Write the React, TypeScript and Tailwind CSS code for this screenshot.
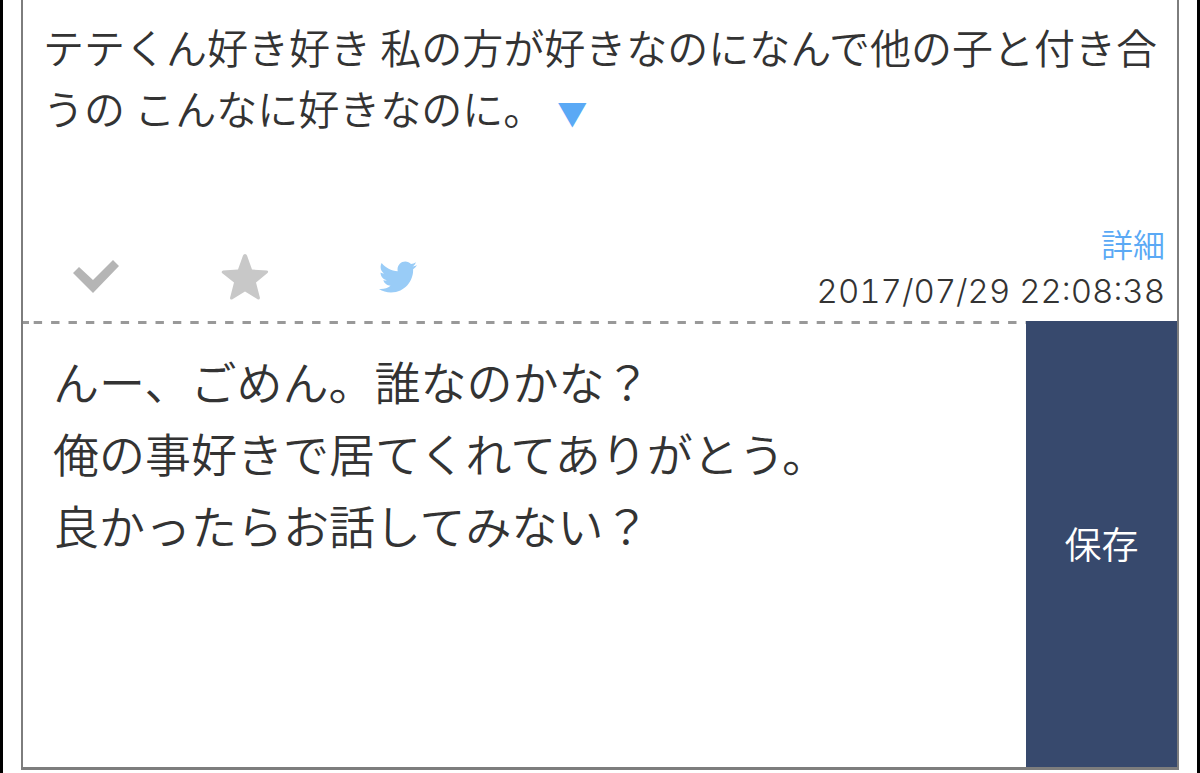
import React, { useState } from "react";
import { FaTwitter } from "react-icons/fa";

const defaultReply = [
  "んー、ごめん。誰なのかな？",
  "俺の事好きで居てくれてありがとう。",
  "良かったらお話してみない？",
].join("\n");

const CheckIcon = () => (
  <svg width="46" height="33" viewBox="0 0 46 33" fill="#b5b5b5">
    <path d="M6 7 L0 13 L20 33 L46 6 L40 0 L20 20 Z" />
  </svg>
);

const StarIcon = () => (
  <svg width="48" height="46" viewBox="0 0 48 46" fill="#c8c8c8">
    <path d="M24 0 Q25.5 0 26 1.5 L31 15.5 L46 16.5 Q48 17.5 46.5 19 L35 28.5 L39 44 Q38.5 46 37 45.500 L24 37.500 L11 45.500 Q9 46 9 44 L13 28.500 L1 19 Q0 17.500 2 16.500 L17 15.500 L22 1.500 Q22.500 0 24 0 Z" />
  </svg>
);

const DashedLine = () => (
  <svg className="block w-full h-[3px]" stroke="#999999" strokeWidth="3">
    <line x1="0" y1="1.5" x2="6" y2="1.5" />
    <line x1="10.7" y1="1.5" x2="100%" y2="1.5" strokeDasharray="8.4 9" />
  </svg>
);

const Question = () => (
  <section className="flex flex-col">
    <p className="pt-4 pl-5 text-[41px] leading-[61px] min-h-[224px]">
      テテくん好き好き 私の方が好きなのになんで他の子と付き合うの こんなに好きなのに。{" "}
      <a
        href="#more"
        className="inline-block ml-1 text-[30px] leading-none text-[#5aa9f5]"
      >
        ▼
      </a>
    </p>
    <div className="flex justify-between pr-3 h-[97px]">
      <div className="flex items-center pl-[50px] pt-2">
        <button aria-label="既読" className="w-[148px]">
          <CheckIcon />
        </button>
        <button aria-label="お気に入り" className="w-[158px]">
          <StarIcon />
        </button>
        <a href="#twitter" aria-label="Twitter">
          <FaTwitter size={38} color="#99ccf7" />
        </a>
      </div>
      <div className="flex flex-col items-end">
        <a href="#detail" className="text-[32px] leading-[38px] text-[#5aa9f5]">
          詳細
        </a>
        <time className="font-[Inter,sans-serif] tabular-nums text-[33px] leading-[58px]">
          2017/07/29 22:08:38
        </time>
      </div>
    </div>
  </section>
);

const Reply = () => {
  const [text, setText] = useState(defaultReply);

  return (
    <form className="flex" onSubmit={(e) => e.preventDefault()}>
      <div className="flex-1 flex flex-col">
        <DashedLine />
        <textarea
          aria-label="返信"
          rows={6}
          value={text}
          onChange={(e) => setText(e.target.value)}
          className="block w-full pl-[30px] pt-5 text-[46px] leading-[72px] resize-none outline-none overflow-hidden h-[443px]"
        />
      </div>
      <button className="w-[151px] bg-[#37496d] text-white text-[37px]">
        保存
      </button>
    </form>
  );
};

export default function App() {
  return (
    <main
      lang="ja"
      className="min-h-screen bg-white border-x-3 border-black px-[18px] pb-[3px] font-[350] text-[#333333] font-['Noto_Sans_CJK_JP',sans-serif]"
    >
      <div className="border-2 border-t-0 border-b-3 border-[#7d7d7d]">
        <Question />
        <Reply />
      </div>
    </main>
  );
}
